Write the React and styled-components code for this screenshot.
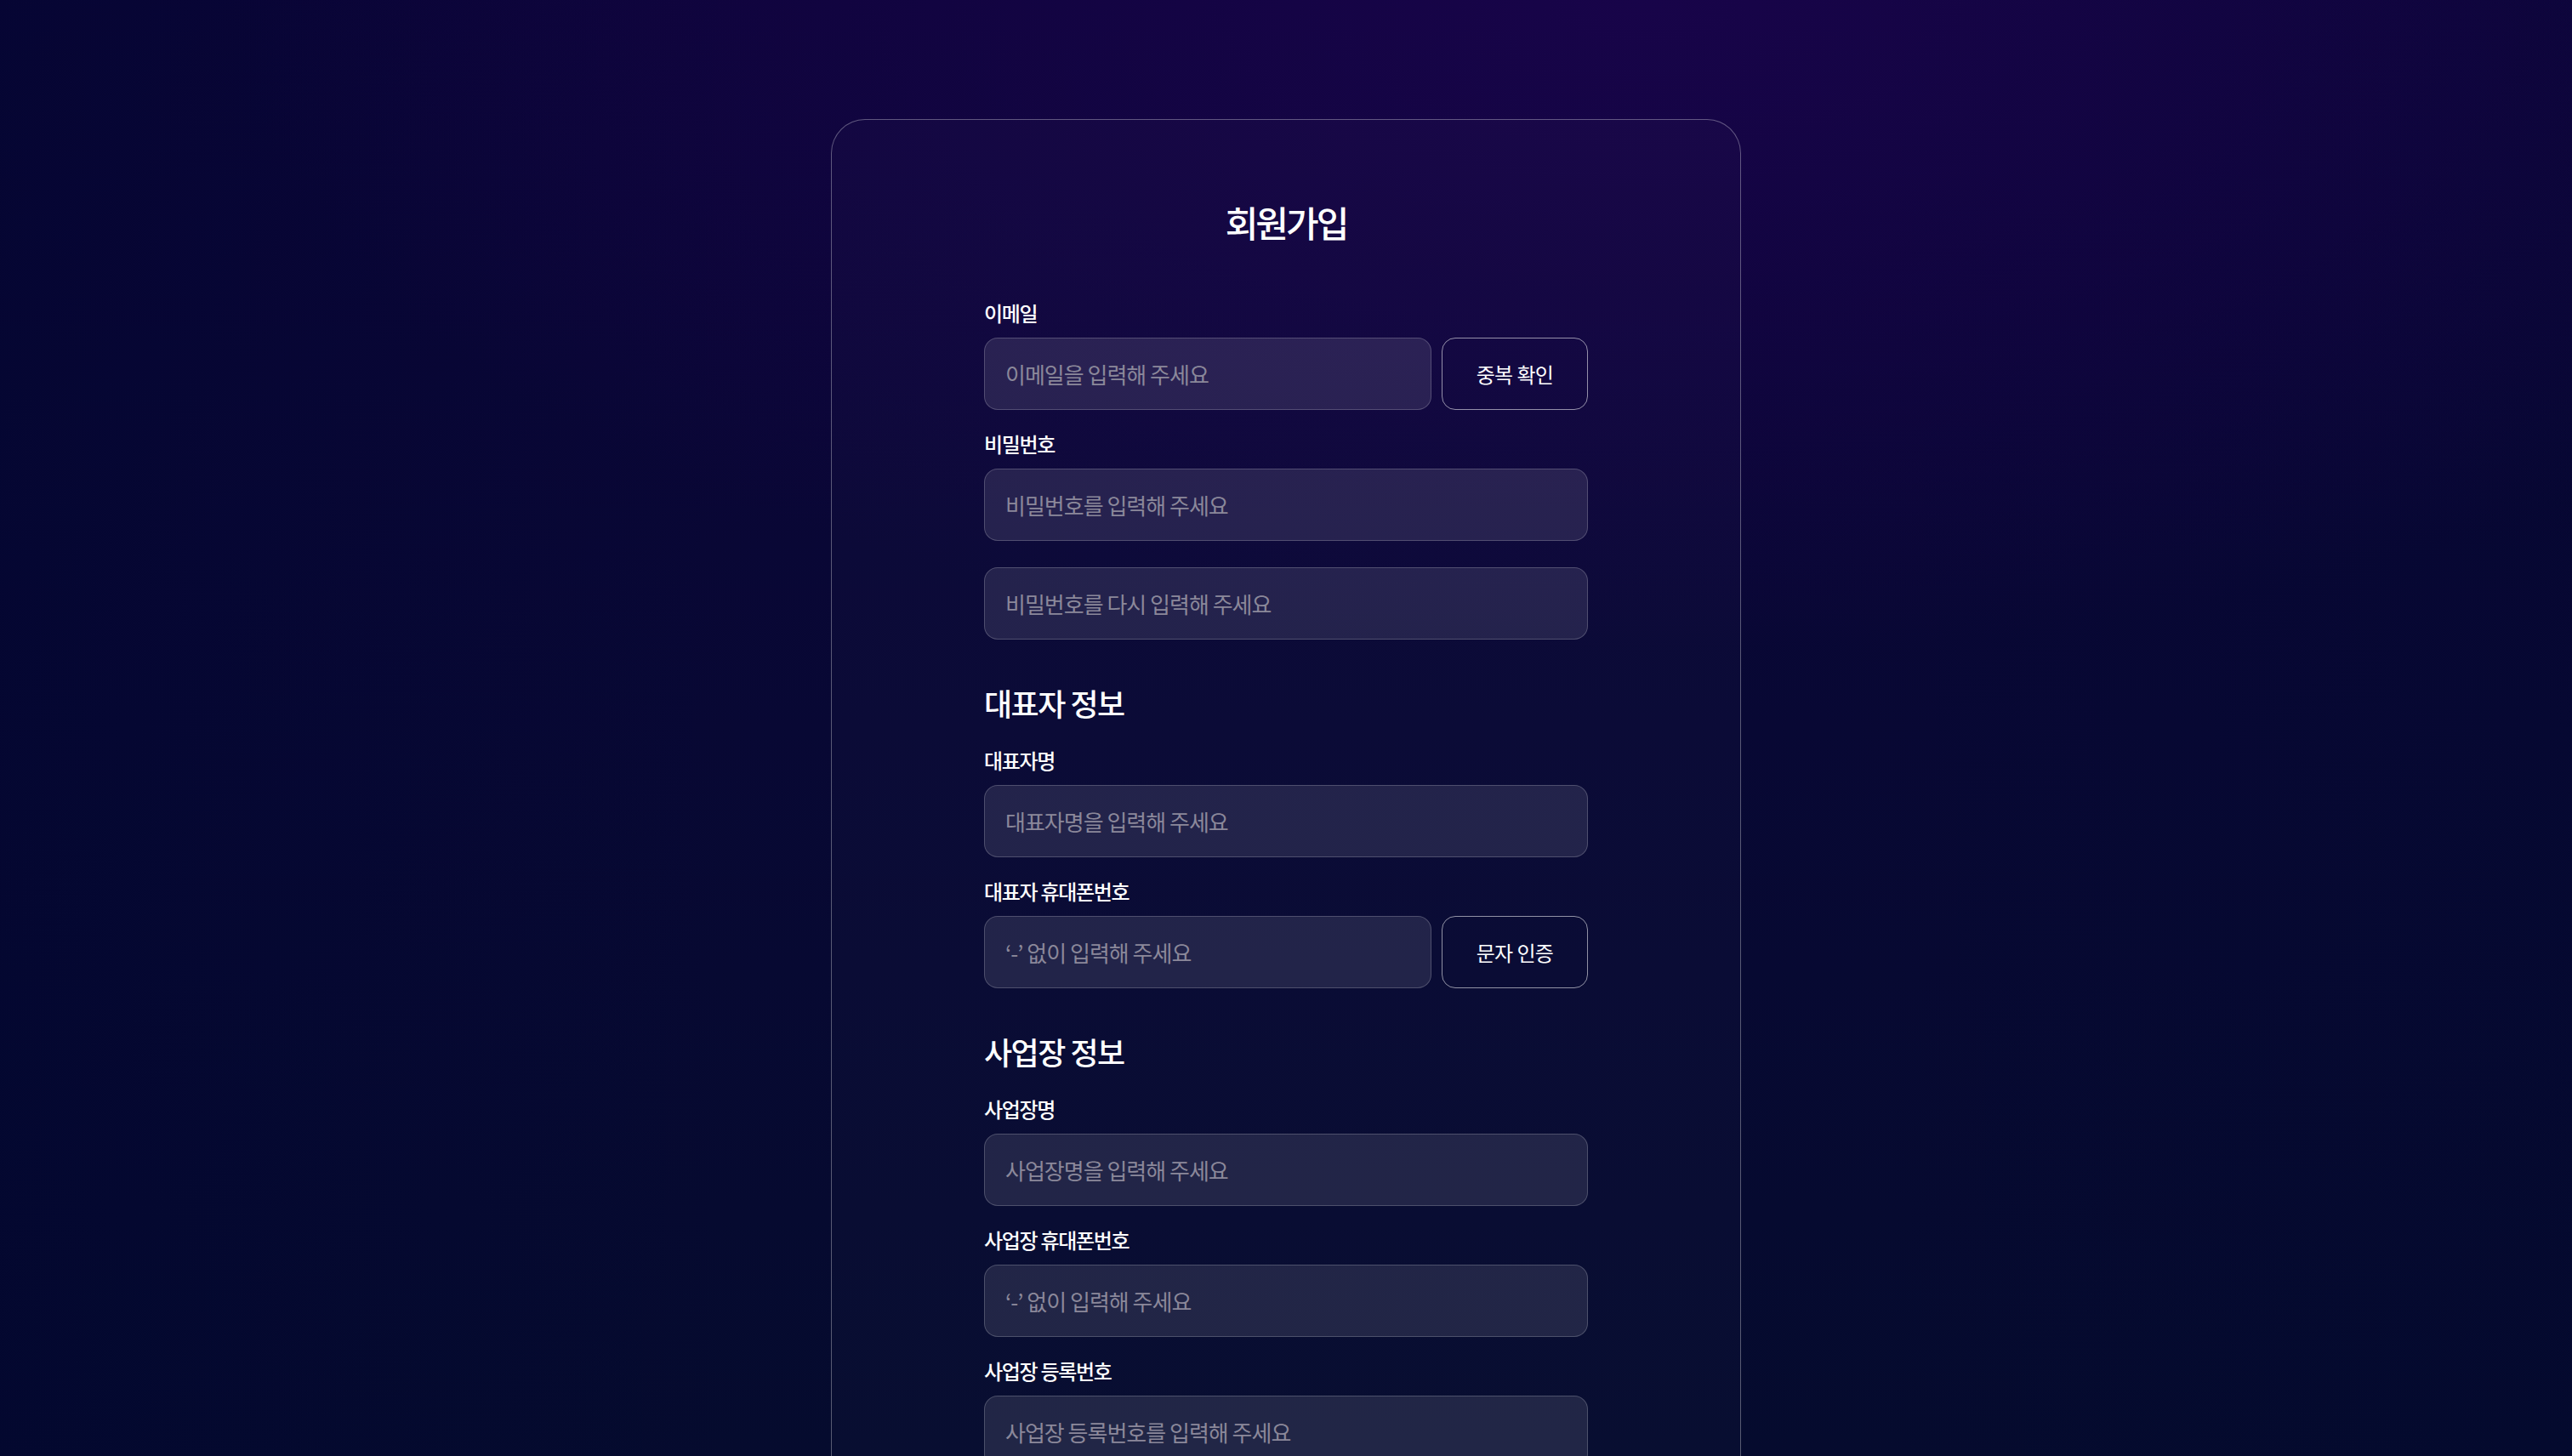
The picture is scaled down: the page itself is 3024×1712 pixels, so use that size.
import React, { useState } from 'react';
import styled, { createGlobalStyle } from 'styled-components';

const GlobalStyle = createGlobalStyle`
  html, body {
    margin: 0;
    padding: 0;
  }
  body {
    font-family: "Noto Sans CJK KR", "Noto Sans", sans-serif;
    color: #ffffff;
    background:
      radial-gradient(ellipse 55% 45% at 64% 0%, rgba(26, 4, 76, 0.85) 0%, rgba(26, 4, 76, 0) 100%),
      linear-gradient(90deg, rgba(2, 6, 48, 0.6) 0%, rgba(2, 6, 48, 0) 30%, rgba(2, 6, 48, 0) 70%, rgba(2, 8, 46, 0.35) 100%),
      linear-gradient(180deg, #0c0439 0%, #080834 50%, #050b2e 100%);
    background-attachment: fixed;
  }
  * {
    box-sizing: border-box;
  }
`;

const Page = styled.div`
  min-height: 100vh;
  display: flex;
  justify-content: center;
  padding: 140px 0 120px;
`;

const Card = styled.div`
  width: 1070px;
  padding: 92px 179px 100px;
  border: 1px solid rgba(255, 255, 255, 0.32);
  border-radius: 40px;
  background: rgba(255, 255, 255, 0.015);
`;

const Title = styled.h1`
  margin: 0 0 62px;
  text-align: center;
  font-size: 42px;
  line-height: 56px;
  font-weight: 500;
  letter-spacing: -3px;
`;

const Form = styled.form`
  display: flex;
  flex-direction: column;
  gap: 23px;
`;

const SectionTitle = styled.h2`
  margin: 27px 0 4px;
  font-size: 36px;
  line-height: 48px;
  font-weight: 500;
  letter-spacing: -1.5px;
`;

const Field = styled.div`
  display: flex;
  flex-direction: column;
  gap: 12px;
`;

const Label = styled.label`
  font-size: 24px;
  line-height: 34px;
  font-weight: 500;
  letter-spacing: -1.3px;
`;

const Row = styled.div`
  display: flex;
  gap: 12px;

  & > input {
    flex: 1;
    min-width: 0;
  }
`;

const Input = styled.input`
  display: block;
  width: 100%;
  height: 85px;
  margin-top: ${(p) => (p.$spaced ? '19px' : '0')};
  padding: 0 24px;
  border: 1px solid rgba(255, 255, 255, 0.2);
  border-radius: 16px;
  background: rgba(255, 255, 255, 0.1);
  color: #ffffff;
  font-family: inherit;
  font-size: 26px;
  letter-spacing: -1px;
  outline: none;

  &::placeholder {
    color: #8b889a;
  }
`;

const SideButton = styled.button`
  flex: 0 0 172px;
  height: 85px;
  border: 1.5px solid rgba(255, 255, 255, 0.55);
  border-radius: 16px;
  background: transparent;
  color: #ffffff;
  font-family: inherit;
  font-size: 24px;
  letter-spacing: -0.6px;
  cursor: pointer;
`;

const App = () => {
  const [form, setForm] = useState({});
  const bind = (key) => ({
    value: form[key] || '',
    onChange: (e) => setForm({ ...form, [key]: e.target.value }),
  });

  return (
    <>
      <GlobalStyle />
      <Page>
        <Card>
          <Title>회원가입</Title>
          <Form onSubmit={(e) => e.preventDefault()}>
            <Field>
              <Label>이메일</Label>
              <Row>
                <Input type="email" placeholder="이메일을 입력해 주세요" {...bind('email')} />
                <SideButton type="button">중복 확인</SideButton>
              </Row>
            </Field>
            <Field>
              <Label>비밀번호</Label>
              <Input type="password" placeholder="비밀번호를 입력해 주세요" {...bind('pw')} />
              <Input $spaced type="password" placeholder="비밀번호를 다시 입력해 주세요" {...bind('pw2')} />
            </Field>

            <SectionTitle>대표자 정보</SectionTitle>
            <Field>
              <Label>대표자명</Label>
              <Input placeholder="대표자명을 입력해 주세요" {...bind('owner')} />
            </Field>
            <Field>
              <Label>대표자 휴대폰번호</Label>
              <Row>
                <Input placeholder="‘-’ 없이 입력해 주세요" {...bind('ownerPhone')} />
                <SideButton type="button">문자 인증</SideButton>
              </Row>
            </Field>

            <SectionTitle>사업장 정보</SectionTitle>
            <Field>
              <Label>사업장명</Label>
              <Input placeholder="사업장명을 입력해 주세요" {...bind('shop')} />
            </Field>
            <Field>
              <Label>사업장 휴대폰번호</Label>
              <Input placeholder="‘-’ 없이 입력해 주세요" {...bind('shopPhone')} />
            </Field>
            <Field>
              <Label>사업장 등록번호</Label>
              <Input placeholder="사업장 등록번호를 입력해 주세요" {...bind('bizNo')} />
            </Field>
          </Form>
        </Card>
      </Page>
    </>
  );
};

export default App;
